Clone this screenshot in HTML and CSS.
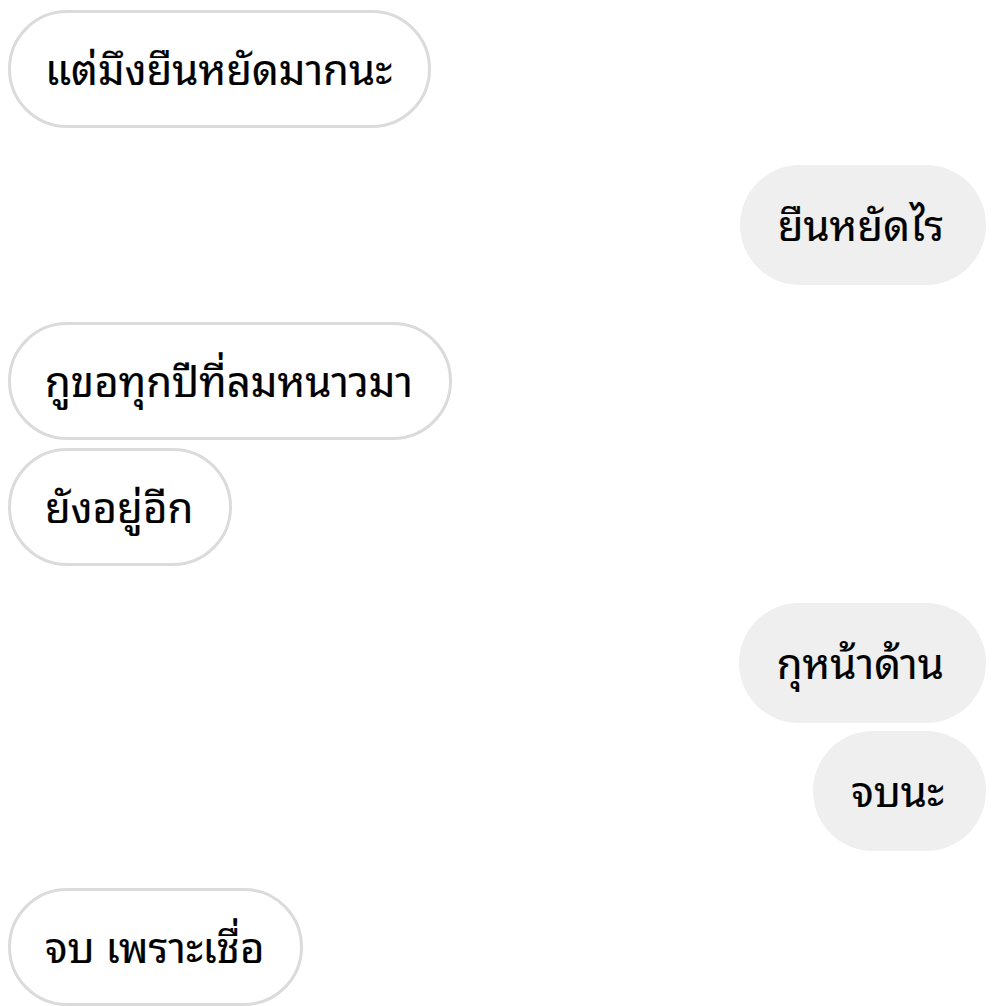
FILE: index.html
```html
<!DOCTYPE html>
<html lang="th">
<head>
    <meta charset="UTF-8">
    <meta name="viewport" content="width=device-width, initial-scale=1.0">
    <title>Chat</title>
    <link rel="stylesheet" href="styles.css">
</head>
<body>
    <div class="chat">
        <div class="group them">
            <div class="bubble">แต่มึงยืนหยัดมากนะ</div>
        </div>
        <div class="group me">
            <div class="bubble">ยืนหยัดไร</div>
        </div>
        <div class="group them">
            <div class="bubble">กูขอทุกปีที่ลมหนาวมา</div>
            <div class="bubble">ยังอยู่อีก</div>
        </div>
        <div class="group me">
            <div class="bubble">กุหน้าด้าน</div>
            <div class="bubble">จบนะ</div>
        </div>
        <div class="group them">
            <div class="bubble">จบ เพราะเชื่อ</div>
        </div>
    </div>
</body>
</html>
```

FILE: styles.css
```css
*,
*::before,
*::after {
    box-sizing: border-box;
}

:root {
    --clr-text: #000000;
    --clr-border: #dbdbdb;
    --clr-mine: #efefef;
}

body {
    margin: 0;
    background: #ffffff;
    color: var(--clr-text);
    font-family: "Noto Sans Thai Looped", "Garuda", "Loma", "Tlwg Typo", "Noto Sans Thai", "Noto Sans", sans-serif;
}

.chat {
    display: flex;
    flex-direction: column;
    gap: 37px;
    padding: 10px 14px 0 8px;
}

.group {
    display: flex;
    flex-direction: column;
    gap: 8px;
}

.them {
    align-items: flex-start;
}

.me {
    align-items: flex-end;
}

.bubble {
    height: 118px;
    display: flex;
    align-items: center;
    padding: 0 36px 6px 34px;
    border-radius: 60px;
    font-size: 42px;
    font-weight: 400;
    -webkit-text-stroke: 0.2px #000;
    white-space: nowrap;
}

.them .bubble {
    border: 3px solid var(--clr-border);
    background: #ffffff;
}

.me .bubble {
    height: 120px;
    background: var(--clr-mine);
    padding: 0 42px 6px 38px;
}
```
